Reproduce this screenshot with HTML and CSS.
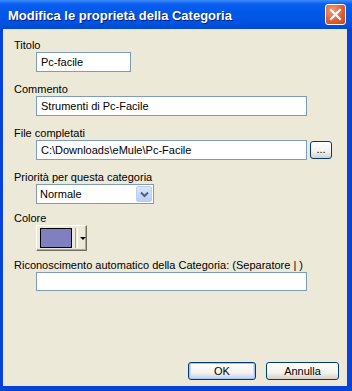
FILE: index.html
```html
<!DOCTYPE html>
<html lang="it">
<head>
  <meta charset="UTF-8" />
  <title>Modifica le proprietà della Categoria</title>
  <link rel="stylesheet" href="styles.css">
</head>
<body>
  <div class="window">
    <div class="titlebar">
      <span class="title">Modifica le proprietà della Categoria</span>
      <div class="close">
        <svg width="13" height="13" viewBox="0 0 13 13">
          <path d="M2 2 L11 11 M11 2 L2 11" stroke="#fff" stroke-width="2.2" stroke-linecap="square"/>
        </svg>
      </div>
    </div>

    <div class="content">
      <div class="field">
        <label>Titolo</label>
        <input type="text" class="edit short" value="Pc-facile">
      </div>

      <div class="field">
        <label>Commento</label>
        <input type="text" class="edit" value="Strumenti di Pc-Facile">
      </div>

      <div class="field">
        <label>File completati</label>
        <div class="row">
          <input type="text" class="edit" value="C:\Downloads\eMule\Pc-Facile">
          <button class="btn browse">...</button>
        </div>
      </div>

      <div class="field tight">
        <label>Priorità per questa categoria</label>
        <div class="combo">
          <span>Normale</span>
          <div class="drop">
            <svg width="9" height="7" viewBox="0 0 9 7">
              <path d="M1 1.5 L4.5 5 L8 1.5" fill="none" stroke="#4d6185" stroke-width="2"/>
            </svg>
          </div>
        </div>
      </div>

      <div class="field tight">
        <label>Colore</label>
        <div class="colorbtn">
          <div class="swatch"></div>
          <div class="sep"></div>
          <div class="arrow"></div>
        </div>
      </div>

      <div class="field">
        <label>Riconoscimento automatico della Categoria: (Separatore | )</label>
        <input type="text" class="edit low" value="">
      </div>

      <div class="buttons">
        <button class="btn ok">OK</button>
        <button class="btn cancel">Annulla</button>
      </div>
    </div>
  </div>
</body>
</html>
```

FILE: styles.css
```css
body {
  margin: 0;
  font-family: Tahoma, "Liberation Sans", sans-serif;
  font-size: 11px;
}

.window {
  width: 352px;
  height: 391px;
  box-sizing: border-box;
  background: #0842d8;
  padding: 0 5px 5px 3px;
  display: flex;
  flex-direction: column;
}

.titlebar {
  height: 29px;
  margin: 0 -5px 0 -3px;
  padding: 0 6px 0 8px;
  display: flex;
  align-items: center;
  background: linear-gradient(#3d8cf8 0, #0a5ef0 4px, #0058e8 12px, #0054e3 22px, #0048d0 29px);
}

.title {
  flex: 1;
  color: #fff;
  font-family: "Liberation Sans", sans-serif;
  font-weight: bold;
  font-size: 13px;
  text-shadow: 1px 1px 0 #0a1e80;
  padding-top: 1px;
}

.close {
  width: 19px;
  height: 19px;
  border: 1px solid #fff;
  border-radius: 3px;
  background: radial-gradient(circle at 35% 30%, #f29a7a, #e05a30 60%, #c8441e);
  display: flex;
  align-items: center;
  justify-content: center;
}

.content {
  flex: 1;
  background: #ece9d8;
  padding: 10px 0 6px 11px;
  display: flex;
  flex-direction: column;
}

.field {
  margin-bottom: 11px;
}

.field.tight {
  margin-bottom: 8px;
}

.field label {
  display: block;
  line-height: 13px;
  color: #000;
}

.edit {
  display: block;
  margin: 0 0 0 22px;
  width: 271px;
  height: 20px;
  box-sizing: border-box;
  border: 1px solid #7f9db9;
  padding: 0 4px;
  font: inherit;
  background: #fff;
}

.edit.short {
  width: 95px;
}

.edit.low {
  height: 19px;
}

.row {
  display: flex;
  align-items: flex-start;
}

.row .edit {
  margin-right: 3px;
}

.btn {
  font: inherit;
  color: #000;
  border: 1px solid #003c74;
  border-radius: 3px;
  background: linear-gradient(#ffffff, #f4f3ee 60%, #d6d0c5);
  padding: 0;
  box-sizing: border-box;
}

.browse {
  width: 22px;
  height: 18px;
  margin-top: 1px;
  line-height: 10px;
  padding-bottom: 2px;
}

.combo {
  margin-left: 22px;
  width: 118px;
  height: 20px;
  box-sizing: border-box;
  border: 1px solid #7f9db9;
  background: #fff;
  display: flex;
  align-items: center;
  padding: 1px 1px 1px 3px;
}

.combo span {
  flex: 1;
}

.drop {
  width: 16px;
  height: 16px;
  box-sizing: border-box;
  border: 1px solid #bccef8;
  border-radius: 2px;
  background: linear-gradient(#dbe6fd, #b9cdf7);
  display: flex;
  align-items: center;
  justify-content: center;
}

.colorbtn {
  margin-left: 22px;
  width: 51px;
  height: 26px;
  box-sizing: border-box;
  background: #ece9d8;
  border-top: 1px solid #fff;
  border-left: 1px solid #fff;
  border-right: 1px solid #716f64;
  border-bottom: 1px solid #716f64;
  box-shadow: inset -1px -1px 0 #aca899;
  display: flex;
  align-items: center;
  padding: 0 0 0 3px;
}

.swatch {
  width: 34px;
  height: 20px;
  box-sizing: border-box;
  border: 1px solid #000;
  background: #8080c0;
}

.sep {
  width: 1px;
  height: 20px;
  margin-left: 3px;
  border-left: 1px solid #aca899;
  border-right: 1px solid #fff;
}

.arrow {
  margin-left: 2px;
  width: 0;
  height: 0;
  border-left: 3px solid transparent;
  border-right: 3px solid transparent;
  border-top: 3px solid #000;
}

.buttons {
  margin-top: auto;
  display: flex;
  justify-content: flex-end;
  gap: 10px;
  padding-right: 8px;
}

.ok, .cancel {
  height: 18px;
  line-height: 14px;
}

.ok {
  width: 68px;
  box-shadow: inset 0 0 0 1px #a9c3f0, inset 0 -1px 0 2px #c9dbf9;
}

.cancel {
  width: 73px;
}
```
